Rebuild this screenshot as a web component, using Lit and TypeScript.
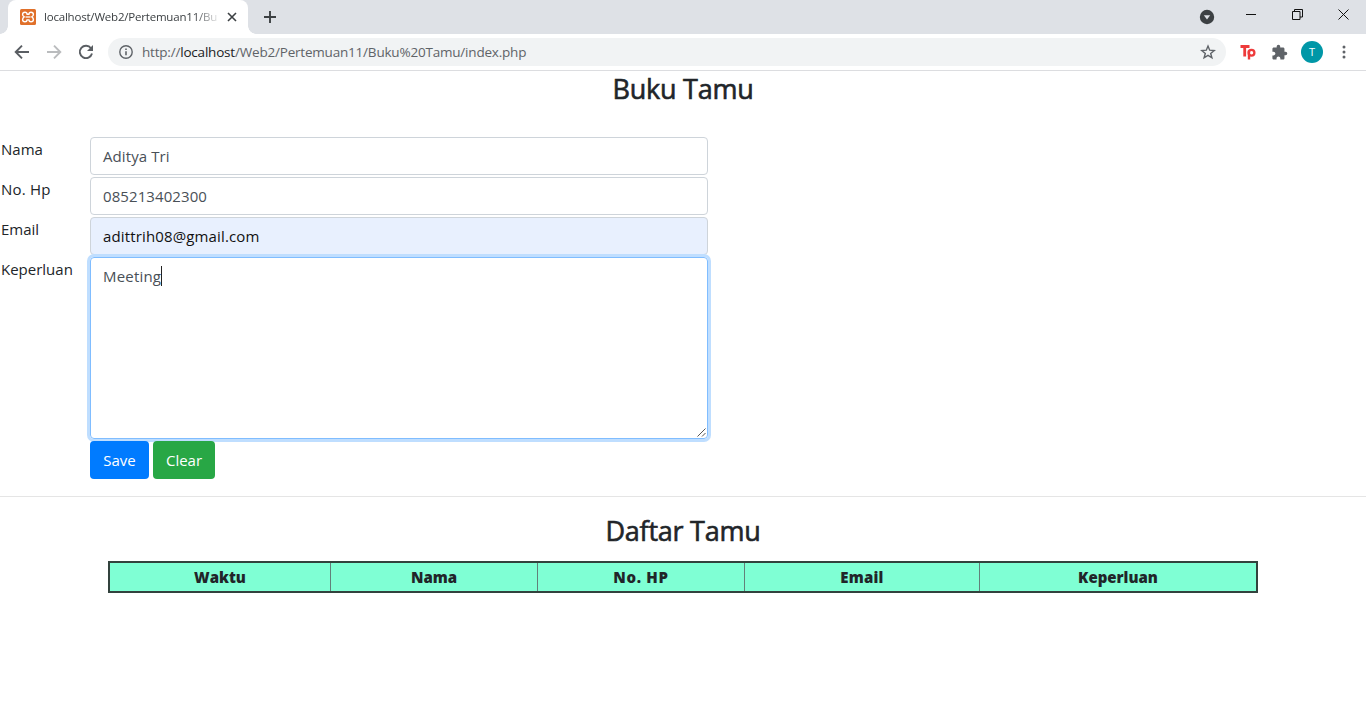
import { LitElement, html, css } from "lit";
import { customElement } from "lit/decorators.js";

@customElement("browser-chrome")
class BrowserChrome extends LitElement {
  static styles = css`
    :host { display: block; font-family: "Open Sans", "Noto Sans", sans-serif; }
    svg { display: block; flex: none; }
    .strip { height: 34px; background: #dee1e6; display: flex; align-items: stretch; }
    .tab { margin-left: 8px; width: 240px; height: 34px; background: #fff; border-radius: 8px 8px 0 0; display: flex; align-items: center; box-sizing: border-box; padding-left: 12px; position: relative; }
    .tab::before, .tab::after { content: ""; position: absolute; bottom: 0; width: 8px; height: 8px; }
    .tab::before { left: -8px; background: radial-gradient(circle at 0 0, transparent 7.5px, #fff 8px); }
    .tab::after { right: -8px; background: radial-gradient(circle at 100% 0, transparent 7.5px, #fff 8px); }
    .title { margin-left: 8px; width: 175px; white-space: nowrap; font-size: 11.5px; line-height: 18px; letter-spacing: -0.2px; color: #3c4043; -webkit-mask-image: linear-gradient(90deg, #000 150px, transparent 177px); }
    .close { margin-left: 8px; }
    .plus { margin: 10px 0 0 15px; }
    .fill { flex: 1; }
    .down { margin: 9px 36px 0 0; }
    .min { margin-left: -5px; }
    .win { margin: 9px 35px 0 0; }
    .win.first { margin-left: -5px; }
    .win.last { margin-right: 17px; }
    .bar { height: 36px; background: #fff; border-bottom: 1px solid #dcdde0; display: flex; align-items: center; }
    .back { margin-left: 14px; }
    .fwd { margin-left: 16px; }
    .reload { margin-left: 16px; }
    .omni { margin-left: 14px; width: 1118px; height: 28px; border-radius: 14px; background: #f1f3f4; display: flex; align-items: center; box-sizing: border-box; padding-left: 10px; }
    .url { margin-left: 8px; font-size: 13.5px; line-height: 20px; letter-spacing: -0.2px; color: #5f6368; white-space: nowrap; }
    .host { color: #202124; }
    .star { margin-right: 10px; }
    .tp { margin-left: 14px; }
    .puzzle { margin-left: 15px; }
    .avatar { margin-left: 13px; width: 22px; height: 22px; border-radius: 50%; background: #0097a7; color: #fff; font-size: 11px; line-height: 22px; text-align: center; }
    .dots { margin-left: 13px; }
  `;
  render() {
    return html`
      <div class="strip">
        <div class="tab">
          <svg width="16" height="16" viewBox="0 0 16 16"><rect width="16" height="16" rx="1.5" fill="#e0702a"/><path d="M5 3.200C3 3.200 2.600 4.600 2.600 5.400c0 1.200.8 1.900 1.500 2.400C3.200 8.400 2.600 9.300 2.600 10.500c0 1.300.9 2.300 2.400 2.300 1.400 0 2-.7 2.100-1.900h1.800c.1 1.200.7 1.900 2.100 1.900 1.500 0 2.400-1 2.400-2.300 0-1.200-.6-2.100-1.500-2.700.7-.5 1.500-1.200 1.500-2.400 0-.8-.4-2.200-2.400-2.200-1.400 0-2 .8-2.100 2H7.100c-.1-1.200-.7-2-2.100-2z" fill="none" stroke="#fff" stroke-width="1.400"/><path d="M5.500 8h5" stroke="#fff" stroke-width="1.300"/></svg>
          <span class="title">localhost/Web2/Pertemuan11/Bu</span>
          <svg class="close" width="10" height="10" viewBox="0 0 10 10"><path d="M1 1l8 8M9 1l-8 8" stroke="#3c4043" stroke-width="1.600"/></svg>
        </div>
        <svg class="plus" width="14" height="14" viewBox="0 0 14 14"><path d="M7 1v12M1 7h12" stroke="#3c4043" stroke-width="1.900"/></svg>
        <div class="fill"></div>
        <svg class="down" width="16" height="16" viewBox="0 0 16 16"><circle cx="8" cy="8" r="7.200" fill="#3c4043"/><path d="M4.800 6.200h6.400L8 10.500z" fill="#dee1e6"/></svg>
        <svg class="win first" width="11" height="11" viewBox="0 0 11 11"><path d="M0 5.500h10" stroke="#111"/></svg>
        <svg class="win" width="11" height="11" viewBox="0 0 11 11"><path d="M.5 2.500h7.500v8H.5zM2.500 2.500v-2h8v7.500H8" fill="none" stroke="#111"/></svg>
        <svg class="win last" width="11" height="11" viewBox="0 0 11 11"><path d="M.5.5l10 10M10.500.5l-10 10" stroke="#111"/></svg>
      </div>
      <div class="bar">
        <svg class="back" width="16" height="16" viewBox="0 0 16 16"><path d="M15 8H2M8 1.700L1.700 8 8 14.300" fill="none" stroke="#5a5e63" stroke-width="1.900"/></svg>
        <svg class="fwd" width="16" height="16" viewBox="0 0 16 16"><path d="M1 8h13M8 1.700L14.300 8 8 14.300" fill="none" stroke="#babcbe" stroke-width="1.900"/></svg>
        <svg class="reload" width="16" height="16" viewBox="0 0 16 16"><path d="M13 4.200A6.200 6.200 0 1 0 14 9.500" fill="none" stroke="#5a5e63" stroke-width="1.900"/><path d="M15 1v6H9z" fill="#5a5e63"/></svg>
        <div class="omni">
          <svg width="16" height="16" viewBox="0 0 16 16"><circle cx="8" cy="8" r="6.200" fill="none" stroke="#5f6368" stroke-width="1.400"/><path d="M8 7.200v4M8 4.400v1.600" stroke="#5f6368" stroke-width="1.600"/></svg>
          <span class="url">http://<span class="host">localhost</span>/Web2/Pertemuan11/Buku%20Tamu/index.php</span>
          <div class="fill"></div>
          <svg class="star" width="16" height="16" viewBox="0 0 16 16"><path d="M8 2l1.700 4.200 4.500.3-3.500 2.900 1.200 4.400L8 11.300l-3.900 2.500 1.200-4.400L1.800 6.500l4.500-.3z" fill="none" stroke="#5f6368" stroke-width="1.400"/></svg>
        </div>
        <svg class="tp" width="16" height="16" viewBox="0 0 16 16"><path d="M.5 2.500H9.500M4.700 2.500V12.500" fill="none" stroke="#ee3b3b" stroke-width="2.800"/><path d="M9 6.500v9" stroke="#ee3b3b" stroke-width="2.400"/><circle cx="11.500" cy="8.800" r="2.900" fill="none" stroke="#ee3b3b" stroke-width="2.300"/></svg>
        <svg class="puzzle" width="17" height="17" viewBox="0 0 24 24"><path fill="#5f6368" d="M20.500 11H19V7c0-1.100-.9-2-2-2h-4V3.500a2.500 2.500 0 0 0-5 0V5H4c-1.100 0-1.990.9-1.990 2v3.800H3.500c1.490 0 2.700 1.210 2.700 2.700s-1.210 2.700-2.700 2.700H2V20c0 1.100.9 2 2 2h3.800v-1.500c0-1.490 1.210-2.700 2.700-2.700s2.700 1.210 2.700 2.700V22H17c1.100 0 2-.9 2-2v-4h1.500a2.500 2.500 0 0 0 0-5z"/></svg>
        <div class="avatar">T</div>
        <svg class="dots" width="16" height="16" viewBox="0 0 16 16" fill="#5f6368"><circle cx="8" cy="3" r="1.500"/><circle cx="8" cy="8" r="1.500"/><circle cx="8" cy="13" r="1.500"/></svg>
      </div>
    `;
  }
}

@customElement("app-root")
class AppRoot extends LitElement {
  static styles = css`
    :host { display: block; height: 704px; overflow: hidden; background: #fff; color: #212529; font-family: "Open Sans", "Noto Sans", sans-serif; font-size: 15px; line-height: 24px; white-space: nowrap; }
    h3 { margin: 0; text-align: center; font-size: 27px; font-weight: 400; line-height: 34px; letter-spacing: -0.25px; -webkit-text-stroke: 0.6px #212529; }
    .top { padding-top: 1px; margin-bottom: 31px; }
    .form { display: grid; grid-template-columns: 89px 618px; row-gap: 2px; padding-left: 1px; align-items: start; }
    .field { box-sizing: border-box; height: 38px; border: 1px solid #ced4da; border-radius: 4px; padding: 6px 12px; color: #495057; letter-spacing: 0.09px; }
    .phone { letter-spacing: 0.2px; }
    .auto { background: #e8f0fe; color: #111; letter-spacing: 0.14px; }
    .area { height: 182px; border-color: #80bdff; box-shadow: 0 0 0 3px #bfdeff; display: flex; position: relative; letter-spacing: 0.2px; }
    .caret { width: 1px; height: 20px; margin-top: 2px; background: #222; }
    .grip { position: absolute; right: 1px; bottom: 1px; }
    .buttons { grid-column: 2; display: flex; gap: 4px; position: relative; }
    .btn { box-sizing: border-box; height: 38px; border-radius: 4px; padding: 7px 0; color: #fff; text-align: center; width: 59px; background: #007bff; }
    .btn.clear { width: 62px; background: #28a745; }
    .rule { margin-top: 17px; height: 1px; background: #e5e5e5; }
    .second { margin-top: 17px; }
    .list { margin: 13px 108px 0; width: 1150px; height: 32px; box-sizing: border-box; border: 2px solid #32423d; background: #7fffd4; display: grid; grid-template-columns: 220px 207px 207px 235px 1fr; font-weight: 800; line-height: 28px; text-align: center; }
    .cell + .cell { border-left: 1px solid #62807a; }
    .cell:nth-child(3) { letter-spacing: 0.7px; }
    .cell:nth-child(4) { letter-spacing: 0.2px; }
  `;
  render() {
    const heads = ["Waktu", "Nama", "No. HP", "Email", "Keperluan"];
    return html`
      <browser-chrome></browser-chrome>
      <h3 class="top">Buku Tamu</h3>
      <div class="form">
        <div>Nama</div><div class="field">Aditya Tri</div>
        <div class="phone">No. Hp</div><div class="field">085213402300</div>
        <div>Email</div><div class="field auto">adittrih08@gmail.com</div>
        <div>Keperluan</div>
        <div class="field area">Meeting<i class="caret"></i>
          <svg class="grip" width="9" height="9" viewBox="0 0 9 9"><path d="M.5 8.500l8-8M5 8.500L8.500 5" stroke="#555" stroke-width="1"/></svg>
        </div>
        <div class="buttons"><div class="btn">Save</div><div class="btn clear">Clear</div></div>
      </div>
      <div class="rule"></div>
      <h3 class="second">Daftar Tamu</h3>
      <div class="list">${heads.map((h) => html`<div class="cell">${h}</div>`)}</div>
    `;
  }
}
